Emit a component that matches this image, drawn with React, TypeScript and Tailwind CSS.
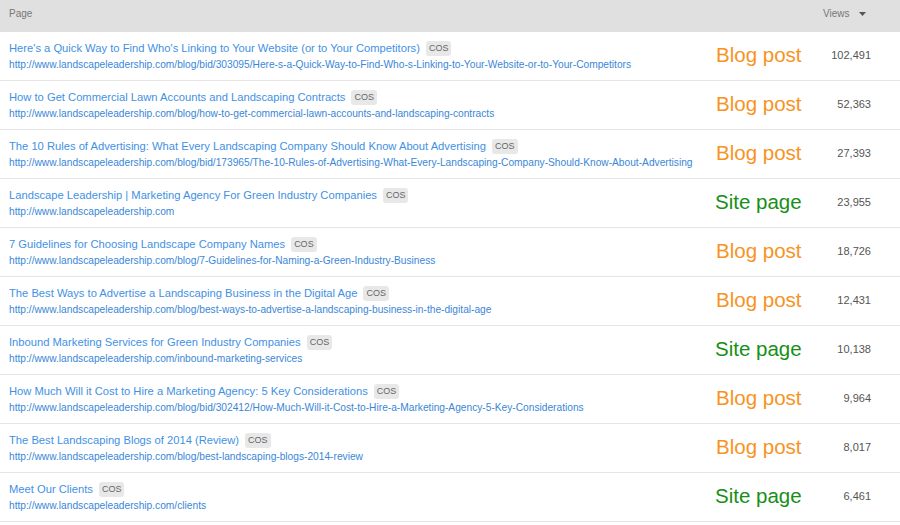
import React from "react";

type Row = { title: string; url: string; type: "Blog post" | "Site page"; views: string };

const rows: Row[] = [
  { title: "Here's a Quick Way to Find Who's Linking to Your Website (or to Your Competitors)", url: "http://www.landscapeleadership.com/blog/bid/303095/Here-s-a-Quick-Way-to-Find-Who-s-Linking-to-Your-Website-or-to-Your-Competitors", type: "Blog post", views: "102,491" },
  { title: "How to Get Commercial Lawn Accounts and Landscaping Contracts", url: "http://www.landscapeleadership.com/blog/how-to-get-commercial-lawn-accounts-and-landscaping-contracts", type: "Blog post", views: "52,363" },
  { title: "The 10 Rules of Advertising: What Every Landscaping Company Should Know About Advertising", url: "http://www.landscapeleadership.com/blog/bid/173965/The-10-Rules-of-Advertising-What-Every-Landscaping-Company-Should-Know-About-Advertising", type: "Blog post", views: "27,393" },
  { title: "Landscape Leadership | Marketing Agency For Green Industry Companies", url: "http://www.landscapeleadership.com", type: "Site page", views: "23,955" },
  { title: "7 Guidelines for Choosing Landscape Company Names", url: "http://www.landscapeleadership.com/blog/7-Guidelines-for-Naming-a-Green-Industry-Business", type: "Blog post", views: "18,726" },
  { title: "The Best Ways to Advertise a Landscaping Business in the Digital Age", url: "http://www.landscapeleadership.com/blog/best-ways-to-advertise-a-landscaping-business-in-the-digital-age", type: "Blog post", views: "12,431" },
  { title: "Inbound Marketing Services for Green Industry Companies", url: "http://www.landscapeleadership.com/inbound-marketing-services", type: "Site page", views: "10,138" },
  { title: "How Much Will it Cost to Hire a Marketing Agency: 5 Key Considerations", url: "http://www.landscapeleadership.com/blog/bid/302412/How-Much-Will-it-Cost-to-Hire-a-Marketing-Agency-5-Key-Considerations", type: "Blog post", views: "9,964" },
  { title: "The Best Landscaping Blogs of 2014 (Review)", url: "http://www.landscapeleadership.com/blog/best-landscaping-blogs-2014-review", type: "Blog post", views: "8,017" },
  { title: "Meet Our Clients", url: "http://www.landscapeleadership.com/clients", type: "Site page", views: "6,461" },
];

export default function App() {
  return (
    <div className="w-[900px] h-[525px] bg-white overflow-hidden" style={{ fontFamily: '"Liberation Sans", Arial, sans-serif' }}>
      <div className="h-[32px] bg-[#e0e0e0] flex items-start pt-[8px] text-[10px] leading-[12px] text-[#777]">
        <div className="flex-1 pl-[9px]">Page</div>
        <div className="w-[77px] flex items-center">
          <span>Views</span>
          <svg width="7" height="4" viewBox="0 0 7 4" className="ml-[9px]"><path d="M0 0 L7 0 L3.5 4 Z" fill="#555" /></svg>
        </div>
      </div>
      {rows.map((r, i) => (
        <div key={i} className="flex items-center border-b border-[#e6e6e6] h-[49px]">
          <div className="flex-1 pl-[9px] pb-[1px]">
            <div className="flex items-center h-[16px]">
              <span className="text-[11.2px] text-[#3f91e4] whitespace-nowrap">{r.title}</span>
              <span className="ml-[6px] px-[3px] h-[15px] leading-[15px] rounded-[3px] bg-[#e8e8e8] text-[9px] text-[#666]">COS</span>
            </div>
            <div className="mt-[1px] text-[10.2px] leading-[13px] text-[#3a87d8] whitespace-nowrap">{r.url}</div>
          </div>
          <div className={`w-[95px] text-[20.5px] leading-[24px] pb-[2px] ${r.type === "Blog post" ? "text-[#f7931e] pl-[1px]" : "text-[#178f17]"}`}>{r.type}</div>
          <div className="w-[61px] text-right text-[11px] text-[#555] pb-[2px]">{r.views}</div>
          <div className="w-[29px]" />
        </div>
      ))}
    </div>
  );
}
